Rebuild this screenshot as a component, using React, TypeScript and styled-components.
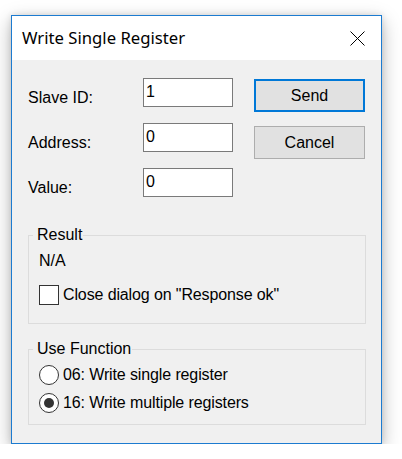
import React from "react";
import styled, { createGlobalStyle } from "styled-components";

const Global = createGlobalStyle`
  html, body { margin: 0; padding: 0; background: #ffffff; }
  body { font-family: "Liberation Sans", Arial, sans-serif; font-size: 16px; color: #000; }
`;

const Page = styled.div`
  padding: 15px 0 0 11px;
`;

const Window = styled.div`
  width: 371px;
  height: 429px;
  box-sizing: border-box;
  border: 1px solid #1c7bd0;
  background: #f0f0f0;
  box-shadow: 0 6px 18px rgba(0, 0, 0, 0.28), 0 0 6px rgba(0, 0, 0, 0.12);
  display: flex;
  flex-direction: column;
`;

const TitleBar = styled.div`
  height: 44px;
  background: #ffffff;
  display: flex;
  align-items: center;
  justify-content: space-between;
  padding: 0 16px 0 10px;
`;

const Title = styled.div`
  font-family: "Noto Sans", "Open Sans", sans-serif;
  font-size: 16.7px;
  line-height: 20px;
  color: #000;
`;

const CloseButton = styled.svg`
  width: 15px;
  height: 15px;
  display: block;
`;

const Body = styled.div`
  flex: 1;
  padding: 18px 16px 0 16px;
  display: flex;
  flex-direction: column;
`;

const TopSection = styled.div`
  display: flex;
  justify-content: space-between;
  align-items: flex-start;
`;

const FormGrid = styled.div`
  display: grid;
  grid-template-columns: 115px 90px;
  grid-auto-rows: 29px;
  row-gap: 16px;
`;

const Label = styled.label`
  line-height: 18px;
  padding-top: 11px;
`;

const TextBox = styled.input`
  box-sizing: border-box;
  width: 90px;
  height: 29px;
  margin: 0;
  border: 1px solid #7a7a7a;
  background: #ffffff;
  padding: 0 2px 2px 2px;
  font-family: "Liberation Sans", Arial, sans-serif;
  font-size: 16px;
  line-height: 18px;
  color: #000;
  outline: none;
  border-radius: 0;
`;

const ButtonColumn = styled.div`
  display: flex;
  flex-direction: column;
  gap: 14px;
  margin-top: 1px;
`;

const Button = styled.button<{ $default?: boolean }>`
  box-sizing: border-box;
  width: 111px;
  height: 33px;
  margin: 0;
  padding: 0;
  background: #e1e1e1;
  border: ${(p) => (p.$default ? "2px solid #0078d7" : "1px solid #adadad")};
  font-family: "Liberation Sans", Arial, sans-serif;
  font-size: 16px;
  line-height: 18px;
  color: #000;
  border-radius: 0;
`;

const GroupBox = styled.fieldset<{ $top: number; $padTop: number; $padBottom: number }>`
  margin: ${(p) => p.$top}px 0 0 0;
  padding: ${(p) => p.$padTop}px 10px ${(p) => p.$padBottom}px 10px;
  border: 1px solid #dcdcdc;
  min-width: 0;
  box-sizing: border-box;
  width: 338px;
`;

const Legend = styled.legend`
  padding: 0 1px 0 4px;
  margin-left: -6px;
  line-height: 18px;
  font-size: 16px;
`;

const StaticText = styled.div`
  line-height: 18px;
`;

const OptionRow = styled.label<{ $gapTop?: number }>`
  display: flex;
  align-items: center;
  height: 20px;
  gap: 4px;
  line-height: 18px;
  letter-spacing: -0.12px;
  margin-top: ${(p) => p.$gapTop ?? 0}px;
`;

const CheckBoxBox = styled.span`
  box-sizing: border-box;
  width: 20px;
  height: 20px;
  border: 1px solid #333333;
  background: #ffffff;
  flex: none;
`;

const RadioCircle = styled.span<{ $checked?: boolean }>`
  box-sizing: border-box;
  width: 20px;
  height: 20px;
  border-radius: 50%;
  border: 1px solid #333333;
  background: #ffffff;
  flex: none;
  display: flex;
  align-items: center;
  justify-content: center;
  &::after {
    content: "";
    width: 10px;
    height: 10px;
    border-radius: 50%;
    background: #333333;
    display: ${(p) => (p.$checked ? "block" : "none")};
  }
`;

export default function App() {
  return (
    <>
      <Global />
      <Page>
        <Window>
          <TitleBar>
            <Title>Write Single Register</Title>
            <CloseButton viewBox="0 0 15 15">
              <path d="M0.5 0.5 L14.5 14.5 M14.5 0.5 L0.5 14.5" stroke="#000" strokeWidth="1" fill="none" />
            </CloseButton>
          </TitleBar>
          <Body>
            <TopSection>
              <FormGrid>
                <Label>Slave ID:</Label>
                <TextBox readOnly value="1" />
                <Label>Address:</Label>
                <TextBox readOnly value="0" />
                <Label>Value:</Label>
                <TextBox readOnly value="0" />
              </FormGrid>
              <ButtonColumn>
                <Button $default>Send</Button>
                <Button>Cancel</Button>
              </ButtonColumn>
            </TopSection>
            <GroupBox $top={29} $padTop={8} $padBottom={18}>
              <Legend>Result</Legend>
              <StaticText>N/A</StaticText>
              <OptionRow $gapTop={15}>
                <CheckBoxBox />
                Close dialog on "Response ok"
              </OptionRow>
            </GroupBox>
            <GroupBox $top={16} $padTop={7} $padBottom={11}>
              <Legend>Use Function</Legend>
              <OptionRow>
                <RadioCircle />
                06: Write single register
              </OptionRow>
              <OptionRow $gapTop={8}>
                <RadioCircle $checked />
                16: Write multiple registers
              </OptionRow>
            </GroupBox>
          </Body>
        </Window>
      </Page>
    </>
  );
}
